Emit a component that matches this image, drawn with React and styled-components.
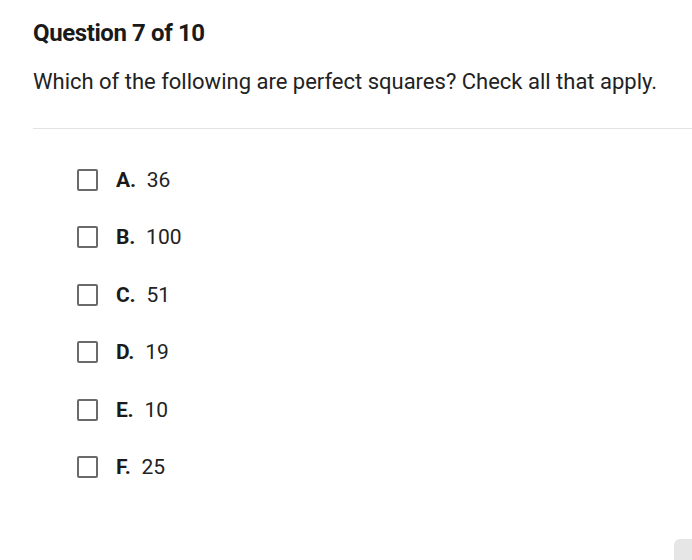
import React from "react";
import styled, { createGlobalStyle } from "styled-components";

const Global = createGlobalStyle`
  html, body { margin: 0; padding: 0; background: #fff; }
  body { font-family: Roboto, "Noto Sans", Arial, sans-serif; color: #222; }
`;

const Page = styled.div`
  width: 692px;
  height: 560px;
  position: relative;
  overflow: hidden;
  box-sizing: border-box;
  padding-top: 19px;
`;

const Header = styled.div`
  padding: 0 0 0 33px;
`;

const Title = styled.h1`
  margin: 0;
  font-size: 24px;
  font-weight: 700;
  line-height: 28px;
  color: #1a1a1a;
  letter-spacing: -0.4px;
`;

const Prompt = styled.p`
  margin: 22px 0 0 0;
  font-size: 22px;
  line-height: 26px;
  color: #222;
`;

const Divider = styled.hr`
  margin: 33px 0 0 33px;
  border: none;
  border-top: 1px solid #e3e3e3;
`;

const Options = styled.ul`
  list-style: none;
  margin: 0;
  padding: 38px 0 0 77px;
  display: flex;
  flex-direction: column;
  gap: 31.4px;
`;

const Option = styled.li`
  display: flex;
  align-items: center;
  height: 26px;
`;

const Box = styled.span`
  width: 17px;
  height: 18px;
  border: 2px solid #6a6a6a;
  border-radius: 2px;
  flex: none;
  margin-right: 18px;
`;

const Letter = styled.span`
  font-weight: 700;
  font-size: 21px;
  color: #1a1a1a;
  margin-right: 11px;
  letter-spacing: -0.2px;
`;

const Value = styled.span`
  font-size: 21px;
  color: #222;
`;

const Corner = styled.div`
  position: absolute;
  left: 674px;
  top: 539px;
  width: 40px;
  height: 40px;
  background: #e6e6e6;
  border-top-left-radius: 6px;
`;

const options = [
  ["A.", "36"],
  ["B.", "100"],
  ["C.", "51"],
  ["D.", "19"],
  ["E.", "10"],
  ["F.", "25"],
];

export default function App() {
  return (
    <Page>
      <Global />
      <Header>
        <Title>Question 7 of 10</Title>
        <Prompt>Which of the following are perfect squares? Check all that apply.</Prompt>
      </Header>
      <Divider />
      <Options>
        {options.map(([l, v]) => (
          <Option key={l}>
            <Box />
            <Letter>{l}</Letter>
            <Value>{v}</Value>
          </Option>
        ))}
      </Options>
      <Corner />
    </Page>
  );
}
